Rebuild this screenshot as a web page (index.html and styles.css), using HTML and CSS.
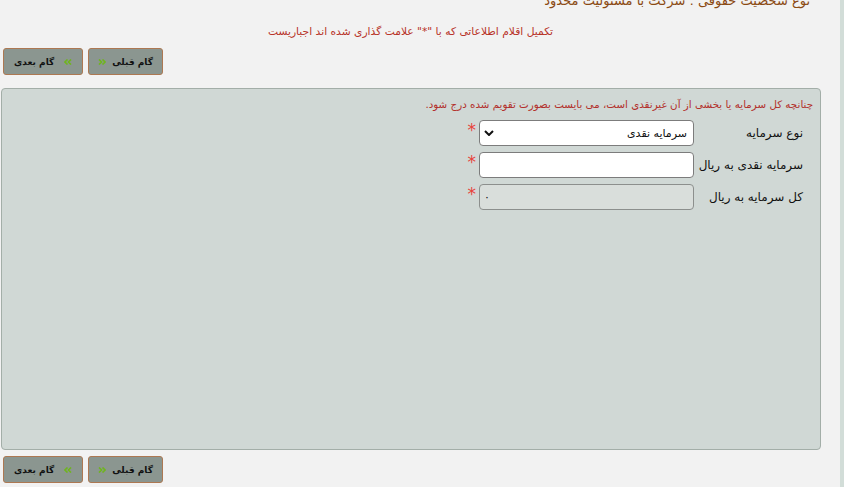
FILE: index.html
```html
<!DOCTYPE html>
<html lang="fa" dir="rtl">
<head>
<meta charset="utf-8">
<title>فرم سرمایه</title>
<link rel="stylesheet" href="styles.css">
</head>
<body>
<div class="page">
  <main class="main">
    <div class="entity">نوع شخصیت حقوقی : شرکت با مسئولیت محدود</div>
    <div class="notice">تکمیل اقلام اطلاعاتی که با "*" علامت گذاری شده اند اجباریست</div>
    <div class="nav">
      <button class="btn btn-prev" type="button"><svg class="chev" viewBox="0 0 8 6" width="8" height="6"><path d="M1 0.5 L3.5 3 L1 5.5 M4.5 0.5 L7 3 L4.5 5.5" fill="none" stroke="#6fb51e" stroke-width="1.6"/></svg><span>گام قبلی</span></button>
      <button class="btn btn-next" type="button"><span>گام بعدی</span><svg class="chev" viewBox="0 0 8 6" width="8" height="6"><path d="M3.5 0.5 L1 3 L3.5 5.5 M7 0.5 L4.5 3 L7 5.5" fill="none" stroke="#6fb51e" stroke-width="1.6"/></svg></button>
    </div>
    <section class="panel">
      <p class="hint">چنانچه کل سرمایه یا بخشی از آن غیرنقدی است، می بایست بصورت تقویم شده درج شود.</p>
      <div class="form">
        <label class="label">نوع سرمایه</label>
        <div class="field select"><span>سرمایه نقدی</span><svg class="caret" viewBox="0 0 10 6" width="10" height="6"><path d="M1 1 L5 5 L9 1" fill="none" stroke="#111" stroke-width="2"/></svg></div>
        <span class="req">*</span>

        <label class="label">سرمایه نقدی به ریال</label>
        <div class="field"></div>
        <span class="req">*</span>

        <label class="label">کل سرمایه به ریال</label>
        <div class="field disabled"><span>۰</span></div>
        <span class="req">*</span>
      </div>
    </section>
    <div class="nav nav-bottom">
      <button class="btn btn-prev" type="button"><svg class="chev" viewBox="0 0 8 6" width="8" height="6"><path d="M1 0.5 L3.5 3 L1 5.5 M4.5 0.5 L7 3 L4.5 5.5" fill="none" stroke="#6fb51e" stroke-width="1.6"/></svg><span>گام قبلی</span></button>
      <button class="btn btn-next" type="button"><span>گام بعدی</span><svg class="chev" viewBox="0 0 8 6" width="8" height="6"><path d="M3.5 0.5 L1 3 L3.5 5.5 M7 0.5 L4.5 3 L7 5.5" fill="none" stroke="#6fb51e" stroke-width="1.6"/></svg></button>
    </div>
  </main>
  <div class="edge"></div>
</div>
</body>
</html>
```
FILE: styles.css
```css
html, body {
  margin: 0;
  padding: 0;
  background: #f2f2f2;
  font-family: "DejaVu Sans", "Noto Sans", sans-serif;
  font-size: 12px;
  color: #111;
}
.page {
  direction: ltr;
  display: flex;
  justify-content: space-between;
  height: 487px;
  overflow: hidden;
}
.edge {
  width: 4px;
  background: #d2ddd8;
}
.main {
  width: 821px;
  direction: rtl;
}
.entity {
  margin-top: -8px;
  padding-right: 11px;
  height: 17px;
  line-height: 17px;
  color: #8b4a12;
  font-size: 13px;
  white-space: nowrap;
}
.notice {
  margin-top: 15px;
  text-align: center;
  color: #b8342a;
  font-size: 10.7px;
  line-height: 16px;
}
.nav {
  display: flex;
  justify-content: flex-end;
  gap: 5px;
  margin-top: 8px;
  padding-left: 3px;
}
.nav-bottom {
  margin-top: 6px;
}
.btn {
  height: 27px;
  padding: 0 9px 0 9px;
  display: flex;
  align-items: center;
  gap: 6px;
  direction: ltr;
  background: #8b9690;
  border: 1px solid #ad7852;
  border-radius: 3px;
  font-family: "DejaVu Sans", sans-serif;
  font-weight: bold;
  font-size: 9px;
  color: #111;
}
.btn-next {
  gap: 10px;
  padding: 0 10px;
}
.panel {
  margin: 13px 0 0 1px;
  height: 362px;
  box-sizing: border-box;
  background: #d0d8d5;
  border: 1px solid #a3aea8;
  border-radius: 4px;
  padding: 7px 7px 0 0;
}
.hint {
  margin: 0;
  color: #b3302c;
  font-size: 10.3px;
  line-height: 16px;
  white-space: nowrap;
}
.form {
  display: grid;
  grid-template-columns: 119px 215px 15px;
  grid-auto-rows: 26px;
  row-gap: 6px;
  margin-top: 8px;
}
.label {
  padding-right: 10px;
  display: flex;
  align-items: center;
  font-size: 12px;
  color: #111;
}
.field {
  box-sizing: border-box;
  background: #fff;
  border: 1px solid #7c7c7c;
  border-radius: 4px;
  display: flex;
  align-items: center;
  justify-content: space-between;
  padding: 0 6px 0 4px;
  font-size: 11px;
}
.disabled {
  background: #d9dedb;
  border-color: #8c8f8d;
}
.disabled span {
  margin-right: auto;
  order: 2;
}
.req {
  color: #e8433b;
  font-size: 17px;
  line-height: 14px;
  padding: 3px 3px 0 0;
}
```
